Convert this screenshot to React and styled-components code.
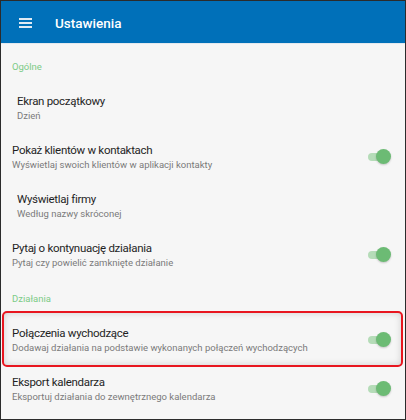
import React from 'react'
import styled, { createGlobalStyle } from 'styled-components'

const Global = createGlobalStyle`
  html, body {
    margin: 0;
    padding: 0;
    background: #f6f6f6;
  }
  * { box-sizing: border-box; }
`

const sections = [
  {
    title: 'Ogólne',
    items: [
      { title: 'Ekran początkowy', sub: 'Dzień', indent: true },
      { title: 'Pokaż klientów w kontaktach', sub: 'Wyświetlaj swoich klientów w aplikacji kontakty', toggle: true },
      { title: 'Wyświetlaj firmy', sub: 'Według nazwy skróconej', indent: true },
      { title: 'Pytaj o kontynuację działania', sub: 'Pytaj czy powielić zamknięte działanie', toggle: true },
    ],
  },
  {
    title: 'Działania',
    items: [
      { title: 'Połączenia wychodzące', sub: 'Dodawaj działania na podstawie wykonanych połączeń wychodzących', toggle: true, highlight: true },
      { title: 'Eksport kalendarza', sub: 'Eksportuj działania do zewnętrznego kalendarza', toggle: true },
    ],
  },
]

function App () {
  return (
    <>
      <Global />
      <Frame>
        <AppBar>
          <MenuButton aria-label="menu">
            <span /><span /><span />
          </MenuButton>
          <BarTitle>Ustawienia</BarTitle>
        </AppBar>
        <List>
          {sections.map(section => (
            <React.Fragment key={section.title}>
              <SectionHeader>{section.title}</SectionHeader>
              {section.items.map(item => (
                <Row key={item.title} $highlight={item.highlight}>
                  <Texts $indent={item.indent}>
                    <Title>{item.title}</Title>
                    <Sub>{item.sub}</Sub>
                  </Texts>
                  {item.toggle && (
                    <Switch>
                      <Track />
                      <Thumb />
                    </Switch>
                  )}
                </Row>
              ))}
            </React.Fragment>
          ))}
        </List>
      </Frame>
    </>
  )
}

export default App

const Frame = styled.div`
  width: 406px;
  height: 420px;
  border: 1px solid #2b2b2b;
  background: #f6f6f6;
  overflow: hidden;
  font-family: Roboto, "Liberation Sans", sans-serif;
  display: flex;
  flex-direction: column;
`

const AppBar = styled.header`
  height: 42px;
  flex-shrink: 0;
  background: #0070b9;
  display: flex;
  align-items: center;
  padding-left: 18px;
  box-shadow: 0 1px 0 #e2e8ee;
  position: relative;
  z-index: 1;
`

const MenuButton = styled.div`
  width: 13px;
  display: flex;
  flex-direction: column;
  gap: 2px;
  margin-right: 23px;
  margin-top: 1px;
  span {
    display: block;
    height: 2px;
    background: #dfeaf4;
  }
`

const BarTitle = styled.h1`
  margin: 0;
  margin-top: 2px;
  color: #fff;
  font-size: 13.5px;
  font-weight: 500;
`

const List = styled.div`
  padding-top: 4px;
  display: flex;
  flex-direction: column;
`

const SectionHeader = styled.div`
  height: 36px;
  padding: 13px 0 0 11px;
  font-size: 9.5px;
  line-height: 14px;
  color: #7ccb86;
`

const Row = styled.div`
  height: 49px;
  display: flex;
  align-items: center;
  padding-right: 14px;
  position: relative;
  &::after {
    content: '';
    display: ${p => (p.$highlight ? 'block' : 'none')};
    position: absolute;
    top: -4px;
    bottom: -3px;
    left: 1px;
    right: 2px;
    border: 2px solid #e8161f;
    border-radius: 5px;
    box-shadow: inset 0 0 7px rgba(0, 0, 0, 0.16);
    pointer-events: none;
  }
`

const Texts = styled.div`
  flex: 1;
  padding-left: ${p => (p.$indent ? '16px' : '11px')};
  display: flex;
  flex-direction: column;
`

const Title = styled.div`
  font-size: 11.5px;
  letter-spacing: -0.3px;
  line-height: 15px;
  color: #1f1f1f;
`

const Sub = styled.div`
  font-size: 9.5px;
  line-height: 13px;
  color: #7a7a7a;
`

const Switch = styled.div`
  width: 25px;
  height: 16px;
  position: relative;
  margin-top: 1px;
`

const Track = styled.div`
  position: absolute;
  left: 2px;
  right: 2px;
  top: 4px;
  height: 8px;
  border-radius: 4px;
  background: #b5dcb8;
`

const Thumb = styled.div`
  position: absolute;
  right: 0;
  top: 0;
  width: 15px;
  height: 15px;
  border-radius: 50%;
  background: #6cbb74;
  box-shadow: 0 1px 2px rgba(0, 0, 0, 0.2);
`
